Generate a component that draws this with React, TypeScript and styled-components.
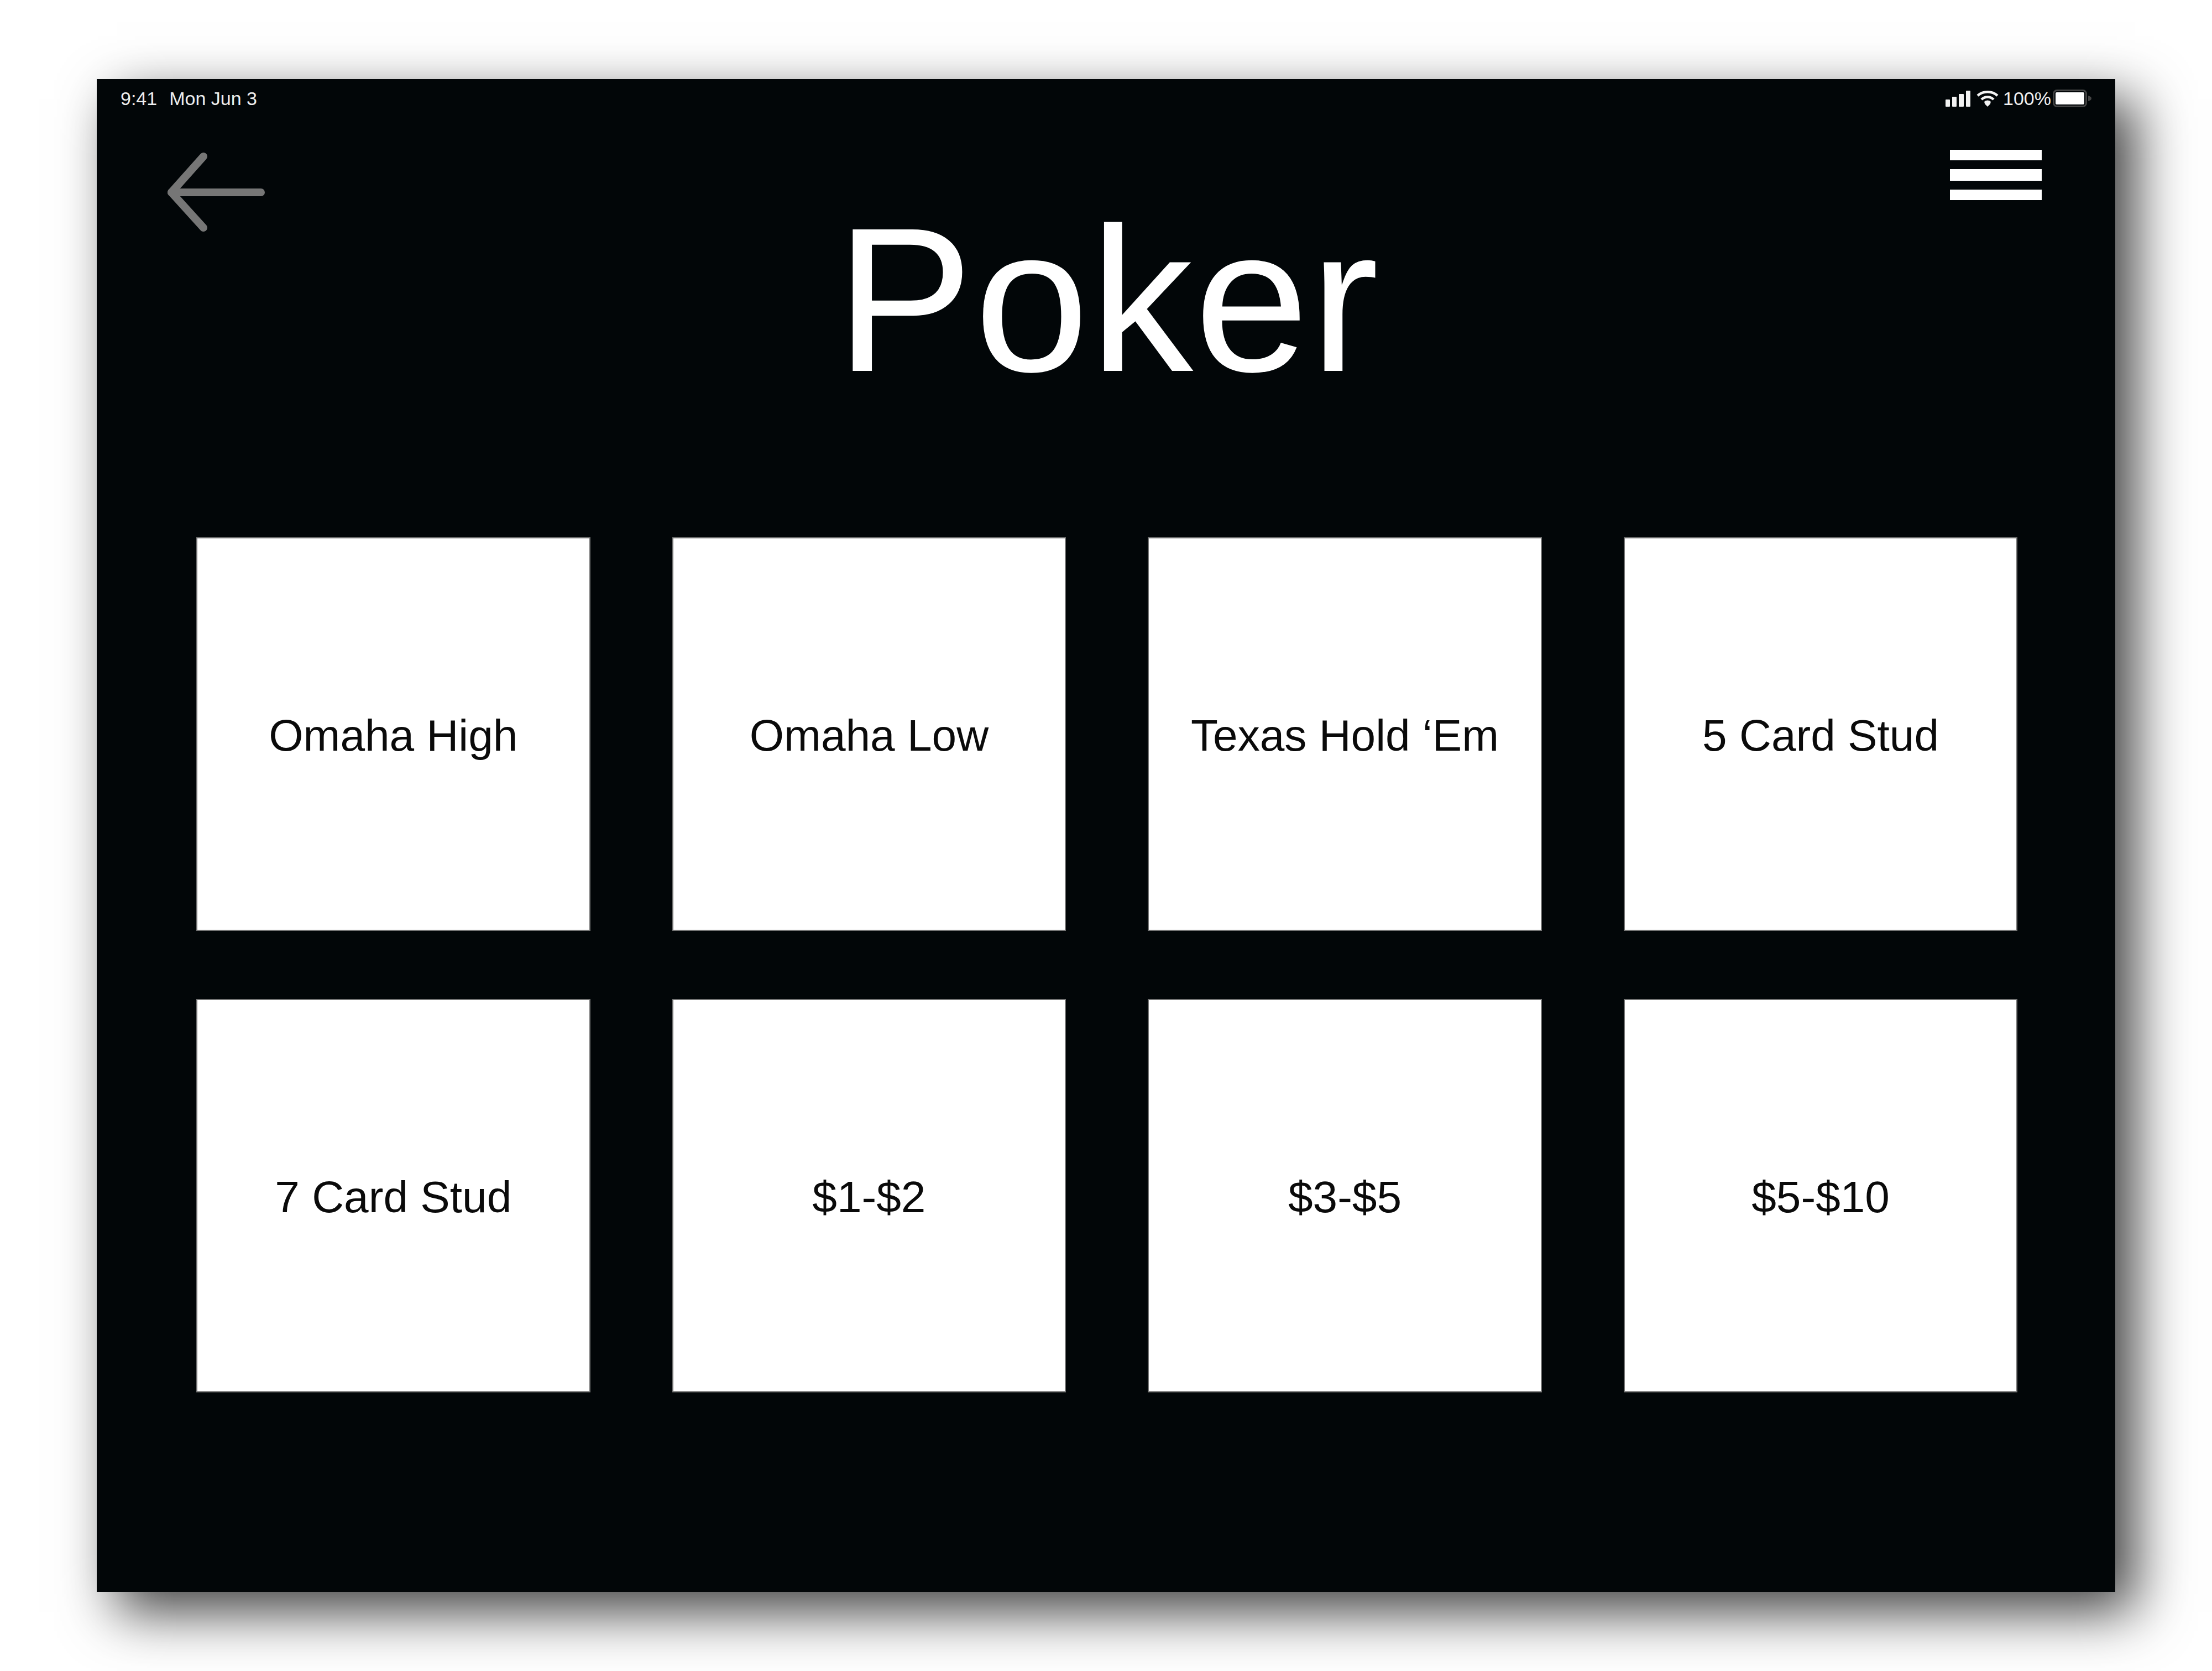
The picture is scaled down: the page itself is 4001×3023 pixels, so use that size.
import React from "react";
import styled, { createGlobalStyle } from "styled-components";

const GlobalStyle = createGlobalStyle`
  html, body {
    margin: 0;
    padding: 0;
    background: #ffffff;
  }
  body {
    font-family: "Liberation Sans", Arial, sans-serif;
  }
`;

const Page = styled.div`
  width: 4001px;
  height: 3023px;
  padding: 143px 0 0 175px;
  box-sizing: border-box;
  overflow: hidden;
  background: #ffffff;
`;

const Screen = styled.main`
  width: 3651px;
  height: 2737px;
  display: flex;
  flex-direction: column;
  background: #020608;
  box-shadow: 36px 36px 94px rgba(0, 0, 0, 0.75);
`;

const StatusBar = styled.div`
  height: 72px;
  padding: 0 43px 2px 43px;
  box-sizing: border-box;
  display: flex;
  align-items: center;
  justify-content: space-between;
  font-size: 34px;
  color: #eeeeee;
`;

const StatusLeft = styled.div`
  display: flex;
  gap: 22px;
`;

const StatusRight = styled.div`
  display: flex;
  align-items: center;
`;

const StatusIcons = styled.div`
  display: flex;
  align-items: center;
  gap: 11px;
`;

const Percent = styled.span`
  margin: 0 3px 0 8px;
`;

const Header = styled.header`
  display: grid;
  grid-template-columns: 1fr auto 1fr;
  align-items: start;
  padding: 0 133px 244px 128px;
`;

const BackButton = styled.button`
  justify-self: start;
  display: block;
  margin: 60px 0 0;
  padding: 0;
  border: 0;
  background: none;
`;

const Title = styled.h1`
  margin: 141px 0 0;
  padding-left: 12px;
  font-size: 372px;
  line-height: 372px;
  font-weight: 400;
  letter-spacing: 2.5px;
  color: #ffffff;
`;

const MenuButton = styled.button`
  justify-self: end;
  width: 166px;
  margin: 56px 0 0;
  padding: 0;
  border: 0;
  background: none;
  display: flex;
  flex-direction: column;
  gap: 16px;
`;

const MenuBar = styled.span<{ $thick?: boolean }>`
  display: block;
  height: ${(props) => (props.$thick ? 21 : 19)}px;
  background: #ffffff;
`;

const TileGrid = styled.section`
  display: grid;
  grid-template-columns: repeat(4, 712.6px);
  grid-auto-rows: 712px;
  column-gap: 148px;
  row-gap: 123px;
  margin-left: 180px;
`;

const Tile = styled.button`
  display: flex;
  align-items: center;
  justify-content: center;
  padding: 5px 0 0;
  box-sizing: border-box;
  background: #ffffff;
  border: 2px solid #757575;
  font-family: "Liberation Sans", Arial, sans-serif;
  font-size: 80.2px;
  line-height: 1;
  color: #0a0a0a;
`;

const tiles = [
  "Omaha High",
  "Omaha Low",
  "Texas Hold ‘Em",
  "5 Card Stud",
  "7 Card Stud",
  "$1-$2",
  "$3-$5",
  "$5-$10",
];

const SignalIcon = () => (
  <svg width="45" height="30" viewBox="0 0 45 30">
    <rect x="0" y="17" width="8" height="13" rx="1" fill="#f2f2f2" />
    <rect x="12" y="12" width="8" height="18" rx="1" fill="#f2f2f2" />
    <rect x="24" y="7" width="9" height="23" rx="1" fill="#f2f2f2" />
    <rect x="37" y="1" width="8" height="29" rx="1" fill="#f2f2f2" />
  </svg>
);

const WifiIcon = () => (
  <svg width="40" height="30" viewBox="0 0 40 30" fill="none" stroke="#f2f2f2" strokeWidth="4.5">
    <path d="M2 10 C12 1 28 1 38 10" />
    <path d="M9 17 C15 11 25 11 31 17" />
    <path d="M15 23 C18 20 22 20 25 23" />
    <path d="M20 30 L14.5 24.5 C18 22 22 22 25.5 24.5 Z" fill="#f2f2f2" stroke="none" />
  </svg>
);

const BatteryIcon = () => (
  <svg width="70" height="32" viewBox="0 0 70 32">
    <rect x="1.5" y="1.5" width="59" height="29" rx="6" fill="none" stroke="#444444" strokeWidth="3" />
    <rect x="5" y="5" width="52" height="22" rx="2" fill="#ffffff" />
    <path d="M64 11 C68 12 70 14 70 16 C70 18 68 20 64 21 Z" fill="#444444" />
  </svg>
);

const BackArrow = () => (
  <svg width="190" height="145" viewBox="0 0 190 145" fill="none" stroke="#767676" strokeWidth="14" strokeLinecap="round" strokeLinejoin="round">
    <path d="M65 8 L7 73 L65 137" />
    <path d="M7 73 L169 73" />
  </svg>
);

const App = () => {
  return (
    <Page>
      <GlobalStyle />
      <Screen>
        <StatusBar>
          <StatusLeft>
            <span>9:41</span>
            <span>Mon Jun 3</span>
          </StatusLeft>
          <StatusRight>
            <StatusIcons>
              <SignalIcon />
              <WifiIcon />
            </StatusIcons>
            <Percent>100%</Percent>
            <BatteryIcon />
          </StatusRight>
        </StatusBar>

        <Header>
          <BackButton aria-label="Back">
            <BackArrow />
          </BackButton>
          <Title>Poker</Title>
          <MenuButton aria-label="Menu">
            <MenuBar />
            <MenuBar $thick />
            <MenuBar />
          </MenuButton>
        </Header>

        <TileGrid>
          {tiles.map((label) => (
            <Tile key={label}>{label}</Tile>
          ))}
        </TileGrid>
      </Screen>
    </Page>
  );
};

export default App;
